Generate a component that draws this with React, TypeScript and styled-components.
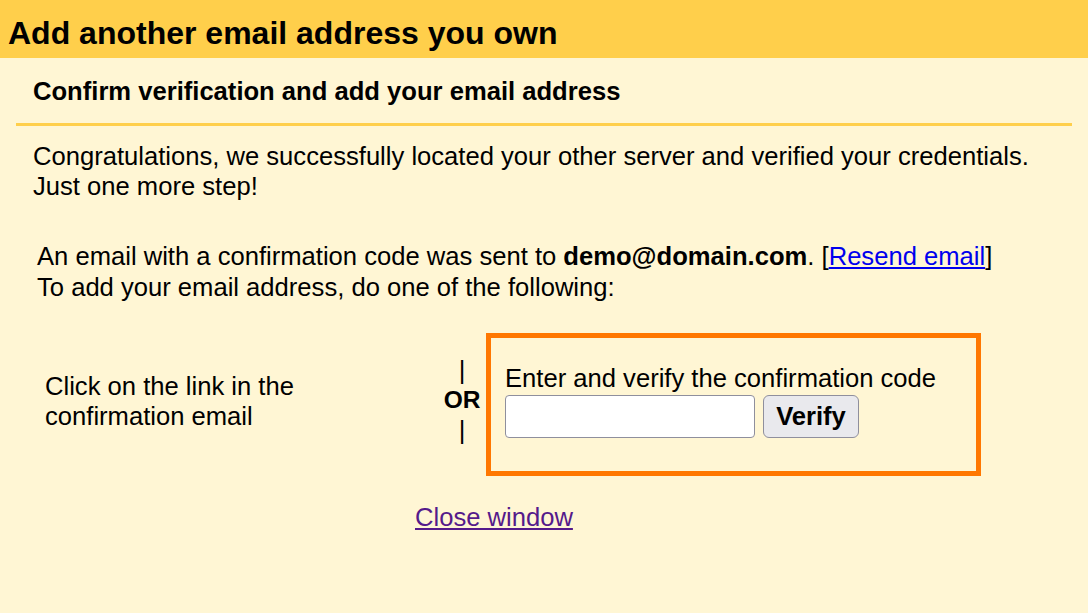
import React from "react";
import styled, { createGlobalStyle } from "styled-components";

const GlobalStyle = createGlobalStyle`
    html,
    body {
        margin: 0;
        padding: 0;
        background: #fff6d4;
    }

    body {
        font-family: "Liberation Sans", Arial, sans-serif;
        color: #000;
    }
`;

const Root = styled.div`
    min-height: 613px;
    background: #fff6d4;
`;

const TitleBar = styled.h1`
    margin: 0;
    height: 58px;
    padding-left: 8px;
    background: #ffcf4b;
    font-size: 32px;
    font-weight: 700;
    line-height: 66px;
    box-sizing: border-box;
    overflow: hidden;
`;

const Content = styled.div`
    margin: 0 16px;
`;

const SectionTitle = styled.h2`
    margin: 0;
    padding: 19px 17px 17px;
    font-size: 25.6px;
    font-weight: 700;
    line-height: 29px;
    border-bottom: 3px solid #ffcf4b;
`;

const Body = styled.div`
    padding: 16px 17px 0;
    font-size: 25.6px;
    line-height: 29.5px;
`;

const Paragraph = styled.p`
    margin: 0;
`;

const Notice = styled.div`
    margin-top: 40px;
    padding-left: 4px;
    line-height: 30.5px;
`;

const ResendLink = styled.a`
    color: #0000ee;
    text-decoration: underline;
`;

const OptionsRow = styled.div`
    display: flex;
    align-items: center;
    margin-top: 31px;
    padding-left: 4px;
`;

const OptionCell = styled.div`
    width: 401px;
    margin-bottom: 6px;
    padding-left: 8px;
    box-sizing: border-box;
    line-height: 29.5px;
`;

const OrColumn = styled.div`
    width: 48px;
    margin-bottom: 10px;
    display: flex;
    flex-direction: column;
    align-items: center;
    line-height: 30px;
`;

const OrBar = styled.span`
    font-weight: 400;
`;

const OrText = styled.span`
    font-size: 24.5px;
    font-weight: 700;
`;

const CodeBox = styled.div`
    width: 495px;
    height: 143px;
    box-sizing: border-box;
    border: 5px solid #ff7700;
    padding: 25px 14px 0;
`;

const CodeLabel = styled.div`
    line-height: 31px;
`;

const CodeForm = styled.div`
    display: flex;
    align-items: center;
    gap: 8px;
    margin-top: 1px;
`;

const CodeInput = styled.input`
    width: 250px;
    height: 43px;
    box-sizing: border-box;
    border: 1px solid #8f8f9d;
    border-radius: 4px;
    background: #fff;
    font-family: inherit;
    font-size: 22px;
    padding: 0 6px;
`;

const VerifyButton = styled.button`
    width: 96px;
    height: 43px;
    box-sizing: border-box;
    border: 1.5px solid #8f8f9d;
    border-radius: 6px;
    background: #e9e9ed;
    font-family: inherit;
    font-size: 25.6px;
    font-weight: 700;
    color: #000;
    padding: 0;
`;

const CloseRow = styled.div`
    margin-top: 27px;
    padding-left: 382px;
`;

const CloseLink = styled.a`
    color: #551a8b;
    text-decoration: underline;
`;

export default function App() {
    return (
        <Root>
            <GlobalStyle />
            <TitleBar>Add another email address you own</TitleBar>
            <Content>
                <SectionTitle>Confirm verification and add your email address</SectionTitle>
                <Body>
                    <Paragraph>
                        Congratulations, we successfully located your other server and verified your credentials.
                        <br />
                        Just one more step!
                    </Paragraph>
                    <Notice>
                        An email with a confirmation code was sent to <b>demo@domain.com</b>. [
                        <ResendLink href="#">Resend email</ResendLink>]
                        <br />
                        To add your email address, do one of the following:
                    </Notice>
                    <OptionsRow>
                        <OptionCell>
                            Click on the link in the
                            <br />
                            confirmation email
                        </OptionCell>
                        <OrColumn>
                            <OrBar>|</OrBar>
                            <OrText>OR</OrText>
                            <OrBar>|</OrBar>
                        </OrColumn>
                        <CodeBox>
                            <CodeLabel>Enter and verify the confirmation code</CodeLabel>
                            <CodeForm>
                                <CodeInput type="text" />
                                <VerifyButton type="button">Verify</VerifyButton>
                            </CodeForm>
                        </CodeBox>
                    </OptionsRow>
                    <CloseRow>
                        <CloseLink href="#">Close window</CloseLink>
                    </CloseRow>
                </Body>
            </Content>
        </Root>
    );
}
